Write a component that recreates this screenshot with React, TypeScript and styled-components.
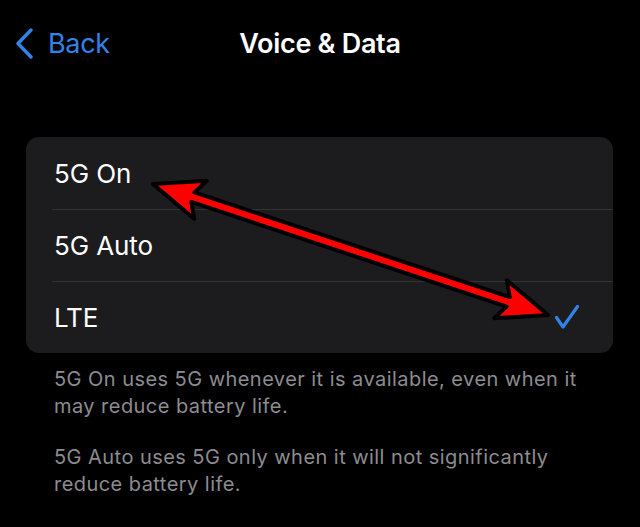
import React from "react";
import styled, { createGlobalStyle } from "styled-components";

const Global = createGlobalStyle`
  html, body { margin: 0; padding: 0; background: #000; }
  body { font-family: Inter, "Noto Sans", "Liberation Sans", sans-serif; -webkit-font-smoothing: antialiased; }
`;

const Screen = styled.div`
  position: relative;
  width: 640px;
  height: 527px;
  background: #000;
  overflow: hidden;
`;

const Nav = styled.div`
  position: relative;
  height: 87px;
  display: flex;
  align-items: center;
  justify-content: center;
`;

const BackButton = styled.div`
  position: absolute;
  left: 15px;
  top: 0;
  height: 87px;
  display: flex;
  align-items: center;
  gap: 14px;
  color: #3283e8;
  font-size: 27px;
  font-weight: 400;
  letter-spacing: -0.3px;
`;

const Title = styled.div`
  color: #fff;
  font-size: 27px;
  font-weight: 600;
  letter-spacing: -0.3px;
`;

const Card = styled.div`
  margin: 50px 27px 0 26px;
  background: #1c1c1e;
  border-radius: 13px;
  overflow: hidden;
`;

const Row = styled.div<{ $first?: boolean }>`
  position: relative;
  height: 72px;
  display: flex;
  align-items: center;
  justify-content: space-between;
  padding: 0 34px 0 28px;
  color: #fff;
  font-size: 26px;
  letter-spacing: -0.1px;
  &::before {
    content: "";
    display: ${(p) => (p.$first ? "none" : "block")};
    position: absolute;
    top: 0;
    left: 26px;
    right: 0;
    height: 1px;
    background: #333336;
  }
`;

const Footer = styled.div`
  padding: 13px 50px 0 54px;
  color: #8c8c91;
  font-size: 20px;
  line-height: 27px;
  letter-spacing: 0.45px;
`;

const Para = styled.p`
  margin: 0 0 24px;
`;

const Overlay = styled.svg`
  position: absolute;
  left: 0;
  top: 0;
  pointer-events: none;
`;

const Check = () => (
  <svg width="24" height="24" viewBox="0 0 24 24" fill="none">
    <path d="M1.5 12.5 L8 22 L22.5 1.5" stroke="#3283e8" strokeWidth="3.2" strokeLinecap="round" strokeLinejoin="round" />
  </svg>
);

const Chevron = () => (
  <svg width="19" height="31" viewBox="0 0 19 31" fill="none">
    <path d="M16 2 L3 15.5 L16 29" stroke="#3283e8" strokeWidth="3.4" strokeLinecap="round" strokeLinejoin="round" />
  </svg>
);

const Arrow = () => {
  const x1 = 153, y1 = 184, x2 = 548, y2 = 315;
  const dx = x2 - x1, dy = y2 - y1;
  const L = Math.sqrt(dx * dx + dy * dy);
  const ang = (Math.atan2(dy, dx) * 180) / Math.PI;
  const pts = [
    [0, 0], [50, -20], [42, -5], [L - 42, -5], [L - 50, -20], [L, 0],
    [L - 50, 20], [L - 42, 5], [42, 5], [50, 20],
  ].map((p) => p.join(",")).join(" ");
  return (
    <Overlay width="640" height="527">
      <g transform={`translate(${x1},${y1}) rotate(${ang})`}>
        <polygon points={pts} fill="#ff0000" stroke="#000" strokeWidth="4" strokeLinejoin="round" />
      </g>
    </Overlay>
  );
};

export default function App() {
  return (
    <Screen>
      <Global />
      <Nav>
        <BackButton>
          <Chevron />
          <span>Back</span>
        </BackButton>
        <Title>Voice &amp; Data</Title>
      </Nav>
      <Card>
        <Row $first>5G On</Row>
        <Row>5G Auto</Row>
        <Row>
          LTE
          <Check />
        </Row>
      </Card>
      <Footer>
        <Para>5G On uses 5G whenever it is available, even when it may reduce battery life.</Para>
        <Para>5G Auto uses 5G only when it will not significantly reduce battery life.</Para>
      </Footer>
      <Arrow />
    </Screen>
  );
}
